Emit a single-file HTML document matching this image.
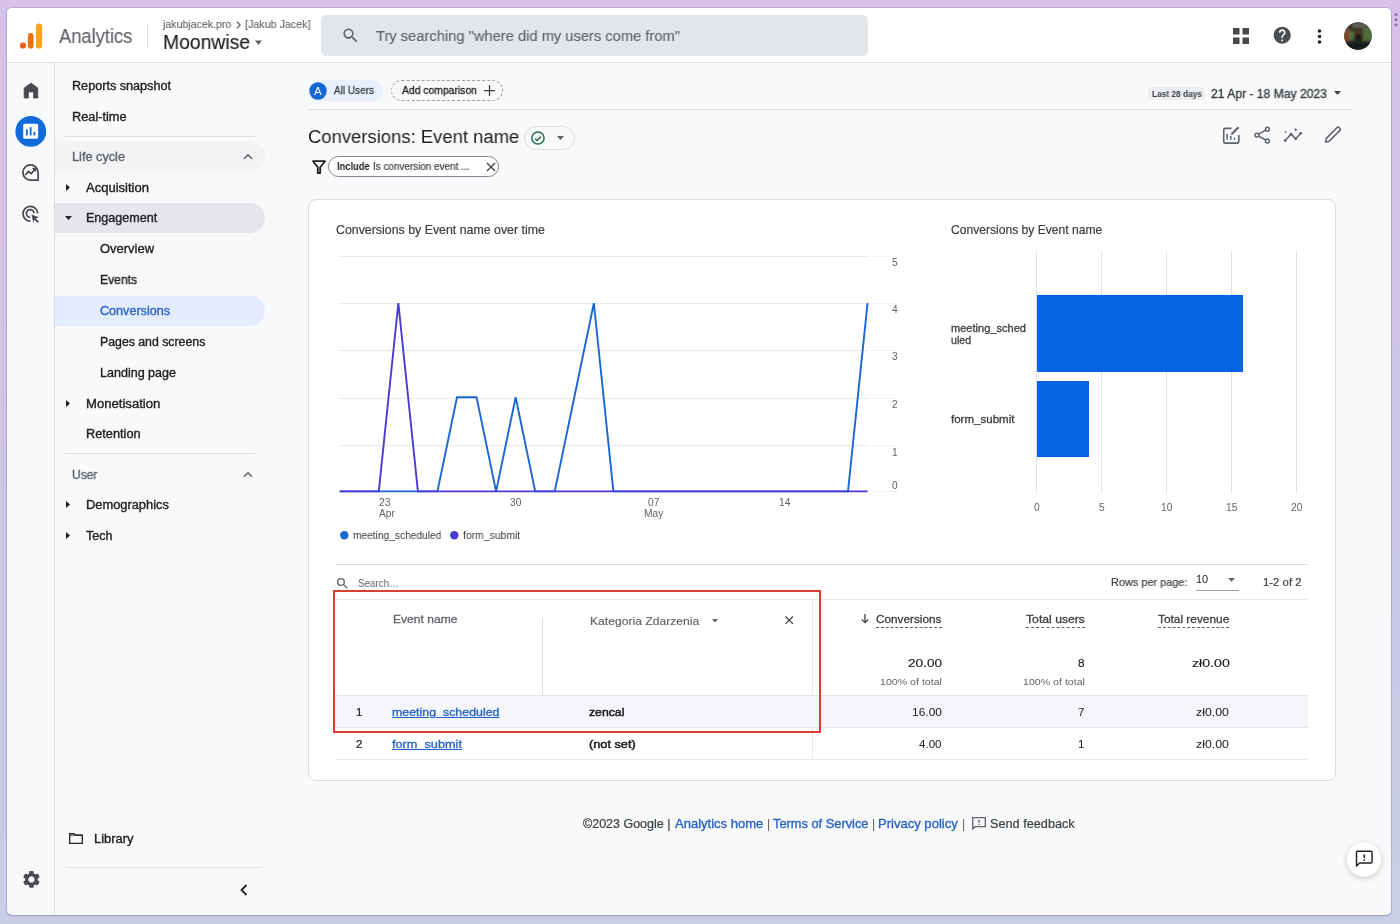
<!DOCTYPE html>
<html><head><meta charset="utf-8">
<style>
*{box-sizing:border-box;margin:0;padding:0}
html,body{width:1400px;height:924px;overflow:hidden}
body{font-family:"Liberation Sans",sans-serif;color:#202124;position:relative;background:linear-gradient(175deg,#d6c2ea 0%,#d6c1e9 15%,#cdc5e6 45%,#c9cae7 75%,#cacfe8 100%)}
.abs{position:absolute}
.t{position:absolute;white-space:nowrap;line-height:1;will-change:transform}
svg{position:absolute;overflow:visible}
</style></head><body>
<div class="abs" style="left:7px;top:8px;width:1384px;height:907px;background:#f8f9fa;border-radius:5px;box-shadow:0 0 0 1px rgba(120,120,140,.25),0 1px 2px rgba(80,80,110,.3)"></div>
<div class="abs" style="left:7px;top:8px;width:1384px;height:55px;background:#fff;border-radius:5px 5px 0 0;border-bottom:1px solid #dfe1e5"></div>
<svg style="left:19px;top:22px" width="24" height="28" viewBox="0 0 24 28"><rect x="17" y="1.4" width="6.2" height="25.2" rx="3.1" fill="#f8a41f"/><rect x="8.9" y="11" width="5.6" height="15.6" rx="2.8" fill="#e8700e"/><circle cx="4" cy="23.5" r="3.1" fill="#e4601c"/></svg>
<div class="t " style="left:59.25px;top:26.00px;font-size:20.5px;color:#5f6368;transform:scaleX(0.8936);transform-origin:0 0;-webkit-text-stroke:0.15px #5f6368;">Analytics</div>
<div class="abs" style="left:147px;top:22.5px;width:1px;height:25.5px;background:#e3e3e3"></div>
<div class="t " style="left:162.50px;top:19.00px;font-size:11.3px;color:#5f6368;transform:scaleX(0.9373);transform-origin:0 0;-webkit-text-stroke:0.1px #5f6368;">jakubjacek.pro</div>
<svg style="left:236px;top:20.5px" width="5" height="8" viewBox="0 0 5 8"><path d="M.8.7L4.2 4 .8 7.3" fill="none" stroke="#5f6368" stroke-width="1.2"/></svg>
<div class="t " style="left:244.50px;top:19.00px;font-size:11.3px;color:#5f6368;transform:scaleX(0.9480);transform-origin:0 0;-webkit-text-stroke:0.1px #5f6368;">[Jakub Jacek]</div>
<div class="t " style="left:163.00px;top:32.00px;font-size:20px;color:#202124;transform:scaleX(0.9662);transform-origin:0 0;-webkit-text-stroke:0.15px #202124;">Moonwise</div>
<svg style="left:255px;top:40px" width="7" height="6" viewBox="0 0 7 6"><path d="M0 .5h7L3.5 5z" fill="#5f6368"/></svg>
<div class="abs" style="left:321px;top:15px;width:547px;height:41px;background:#e3e6e9;border-radius:5px"></div>
<svg style="left:341px;top:26px" width="19" height="19" viewBox="0 0 24 24"><path fill="#5f6368" d="M15.5 14h-.79l-.28-.27A6.47 6.47 0 0 0 16 9.5 6.5 6.5 0 1 0 9.5 16c1.61 0 3.090-.59 4.23-1.57l.27.28v.79l5 4.99L20.49 19l-4.99-5zm-6 0C7.010 14 5 11.99 5 9.5S7.01 5 9.5 5 14 7.010 14 9.5 11.99 14 9.5 14z"/></svg>
<div class="t " style="left:375.75px;top:28.00px;font-size:15.5px;color:#5f6368;transform:scaleX(0.9484);transform-origin:0 0;-webkit-text-stroke:0.15px #5f6368;">Try searching "where did my users come from"</div>
<svg style="left:1233px;top:28px" width="16" height="16" viewBox="0 0 16 16" fill="#47494d"><rect x="0" y="0" width="6.5" height="6.5"/><rect x="9.5" y="0" width="6.5" height="6.5"/><rect x="0" y="9.5" width="6.5" height="6.5"/><rect x="9.5" y="9.5" width="6.5" height="6.5"/></svg>
<svg style="left:1272px;top:25.2px" width="20.4" height="20.4" viewBox="0 0 24 24"><path fill="#4a4d51" d="M12 2C6.48 2 2 6.48 2 12s4.48 10 10 10 10-4.48 10-10S17.52 2 12 2zm1 17h-2v-2h2v2zm2.07-7.75l-.9.92C13.45 12.9 13 13.5 13 15h-2v-.5c0-1.1.45-2.1 1.17-2.83l1.24-1.26c.37-.36.59-.86.59-1.41 0-1.1-.9-2-2-2s-2 .9-2 2H8c0-2.21 1.79-4 4-4s4 1.79 4 4c0 .88-.36 1.68-.93 2.25z"/></svg>
<svg style="left:1317px;top:29px" width="5" height="15" viewBox="0 0 5 15" fill="#202124"><circle cx="2.5" cy="2" r="1.8"/><circle cx="2.5" cy="7.5" r="1.8"/><circle cx="2.5" cy="13" r="1.8"/></svg>
<svg style="left:1343.5px;top:22px" width="28" height="28" viewBox="0 0 28 28"><defs><clipPath id="av"><circle cx="14" cy="14" r="13.7"/></clipPath><filter id="bl"><feGaussianBlur stdDeviation="1"/></filter></defs><g clip-path="url(#av)"><rect width="28" height="28" fill="#2e302a"/><g filter="url(#bl)"><rect x="-2" y="6" width="8" height="13" fill="#7a4a28"/><rect x="19" y="5" width="10" height="14" fill="#4f6a3a"/><rect x="5" y="9" width="5" height="9" fill="#55703e"/><rect x="8" y="1" width="14" height="5" fill="#5e5e52"/><ellipse cx="14.5" cy="12" rx="4.5" ry="6" fill="#4a3428"/><ellipse cx="14.5" cy="15.5" rx="3.5" ry="3.5" fill="#22180f"/><rect x="0" y="20" width="28" height="10" fill="#161c1a"/></g></g></svg>
<div class="abs" style="left:54px;top:62px;width:1px;height:853px;background:#dadce0"></div>
<svg style="left:23px;top:82px" width="16" height="17" viewBox="3 3 18 18"><path fill="#47494d" stroke="#47494d" stroke-width="0.8" stroke-linejoin="round" d="M12 3.6L4.3 9.3v11.2h4.8v-6.8h5.8v6.8h4.8V9.3z"/></svg>
<svg style="left:15px;top:116.3px" width="32" height="31" viewBox="0 0 32 31"><circle cx="15.8" cy="15.4" r="15.4" fill="#0f6bdc"/><rect x="8.2" y="7.8" width="14.9" height="14.9" rx="1.5" fill="#fff"/><rect x="11" y="13.5" width="1.8" height="6" fill="#0f6bdc"/><rect x="14.75" y="11.1" width="1.8" height="8.4" fill="#0f6bdc"/><rect x="18.5" y="15.9" width="1.8" height="3.6" fill="#0f6bdc"/></svg>
<svg style="left:22.3px;top:164px" width="17" height="17" viewBox="0 0 17 17" fill="none" stroke="#47494d" stroke-width="1.7"><path d="M16.1 8.5A7.6 7.6 0 1 0 8.5 16.1H16.1Z"/><path d="M3.3 10.8l3.2-3.3 2.6 2.1 3.8-4.2"/><path d="M10.3 4.1h3.6v3.6z" fill="#47494d" stroke-width=".6"/></svg>
<svg style="left:22px;top:205px" width="18" height="18" viewBox="0 0 18 18" fill="none" stroke="#47494d" stroke-width="1.7"><path d="M8.4 16.2A7.4 7.4 0 1 1 15.8 8.4"/><path d="M8.2 12.2A3.8 3.8 0 1 1 12 8.3"/><path d="M9.5 9.5l7.3 2.8-3 1.2 3.2 3.2-1.3 1.3-3.2-3.2-1.2 3z" fill="#47494d" stroke="none"/></svg>
<svg style="left:20.5px;top:869.1px" width="20.9" height="20.9" viewBox="0 0 24 24"><path fill="#47494d" d="M19.14 12.94c.04-.3.06-.61.06-.94 0-.32-.02-.64-.07-.94l2.03-1.58a.49.49 0 0 0 .12-.61l-1.92-3.32a.488.488 0 0 0-.59-.22l-2.39.96c-.5-.38-1.03-.7-1.62-.94l-.36-2.54a.484.484 0 0 0-.48-.41h-3.84c-.24 0-.43.17-.47.41l-.36 2.54c-.59.24-1.13.57-1.62.94l-2.39-.96c-.22-.08-.47 0-.59.22L2.74 8.87c-.12.21-.08.47.12.61l2.03 1.58c-.05.3-.09.63-.09.94s.02.64.07.94l-2.03 1.58a.49.49 0 0 0-.12.61l1.92 3.32c.12.22.37.29.59.22l2.39-.96c.5.38 1.030.7 1.62.94l.36 2.54c.05.24.24.41.48.41h3.84c.24 0 .44-.17.47-.41l.36-2.54c.59-.24 1.13-.56 1.62-.94l2.39.96c.22.08.47 0 .59-.22l1.92-3.32c.12-.22.07-.47-.12-.61l-2.01-1.58zM12 15.6c-1.98 0-3.6-1.62-3.6-3.6s1.62-3.6 3.6-3.6 3.6 1.62 3.6 3.6-1.62 3.6-3.6 3.6z"/></svg>
<div class="t " style="left:72.30px;top:80.00px;font-size:12.3px;color:#202124;transform:scaleX(1.0269);transform-origin:0 0;-webkit-text-stroke:0.35px #202124;">Reports snapshot</div>
<div class="t " style="left:72.30px;top:111.00px;font-size:12.3px;color:#202124;transform:scaleX(1.0374);transform-origin:0 0;-webkit-text-stroke:0.35px #202124;">Real-time</div>
<div class="abs" style="left:65px;top:136px;width:190px;height:1px;background:#dadce0"></div>
<div class="abs" style="left:55px;top:141px;width:210px;height:31px;background:#f1f3f4;border-radius:0 16px 16px 0"></div>
<div class="t " style="left:72.30px;top:151.00px;font-size:12.3px;color:#5f6368;transform:scaleX(1.0337);transform-origin:0 0;-webkit-text-stroke:0.35px #5f6368;">Life cycle</div>
<svg style="left:242.5px;top:153px" width="10" height="7" viewBox="0 0 10 7"><path d="M1 5.8L5 1.8l4 4" fill="none" stroke="#5f6368" stroke-width="1.6"/></svg>
<svg style="left:66px;top:184px" width="4" height="7" viewBox="0 0 4 7"><path d="M0 0l4 3.5L0 7z" fill="#202124"/></svg>
<div class="t " style="left:86.00px;top:182.00px;font-size:12.3px;color:#202124;transform:scaleX(1.0591);transform-origin:0 0;-webkit-text-stroke:0.35px #202124;">Acquisition</div>
<div class="abs" style="left:55px;top:203px;width:210px;height:30px;background:#e4e6e9;border-radius:0 15px 15px 0"></div>
<svg style="left:64.5px;top:216px" width="7" height="4" viewBox="0 0 7 4"><path d="M0 0h7L3.5 4z" fill="#202124"/></svg>
<div class="t " style="left:86.00px;top:212.00px;font-size:12.3px;color:#202124;transform:scaleX(1.0207);transform-origin:0 0;-webkit-text-stroke:0.35px #202124;">Engagement</div>
<div class="t " style="left:99.50px;top:243.00px;font-size:12.3px;color:#202124;transform:scaleX(1.0534);transform-origin:0 0;-webkit-text-stroke:0.35px #202124;">Overview</div>
<div class="t " style="left:99.50px;top:274.00px;font-size:12.3px;color:#202124;transform:scaleX(0.9840);transform-origin:0 0;-webkit-text-stroke:0.35px #202124;">Events</div>
<div class="abs" style="left:55px;top:296px;width:210px;height:30px;background:#e3ecfc;border-radius:0 15px 15px 0"></div>
<div class="t " style="left:99.50px;top:305.00px;font-size:12.3px;color:#2b63c6;transform:scaleX(1.0239);transform-origin:0 0;-webkit-text-stroke:0.35px #2b63c6;">Conversions</div>
<div class="t " style="left:99.50px;top:336.00px;font-size:12.3px;color:#202124;-webkit-text-stroke:0.35px #202124;">Pages and screens</div>
<div class="t " style="left:99.50px;top:367.00px;font-size:12.3px;color:#202124;transform:scaleX(1.0193);transform-origin:0 0;-webkit-text-stroke:0.35px #202124;">Landing page</div>
<svg style="left:66px;top:400px" width="4" height="7" viewBox="0 0 4 7"><path d="M0 0l4 3.5L0 7z" fill="#202124"/></svg>
<div class="t " style="left:85.70px;top:398.00px;font-size:12.3px;color:#202124;transform:scaleX(1.0668);transform-origin:0 0;-webkit-text-stroke:0.35px #202124;">Monetisation</div>
<div class="t " style="left:85.70px;top:428.00px;font-size:12.3px;color:#202124;transform:scaleX(1.0369);transform-origin:0 0;-webkit-text-stroke:0.35px #202124;">Retention</div>
<div class="abs" style="left:65px;top:453px;width:190px;height:1px;background:#dadce0"></div>
<div class="t " style="left:72.00px;top:469.00px;font-size:12.3px;color:#5f6368;transform:scaleX(0.9780);transform-origin:0 0;-webkit-text-stroke:0.35px #5f6368;">User</div>
<svg style="left:242.5px;top:470.5px" width="10" height="7" viewBox="0 0 10 7"><path d="M1 5.8L5 1.8l4 4" fill="none" stroke="#5f6368" stroke-width="1.6"/></svg>
<svg style="left:66px;top:501px" width="4" height="7" viewBox="0 0 4 7"><path d="M0 0l4 3.5L0 7z" fill="#202124"/></svg>
<div class="t " style="left:85.70px;top:499.00px;font-size:12.3px;color:#202124;transform:scaleX(1.0453);transform-origin:0 0;-webkit-text-stroke:0.35px #202124;">Demographics</div>
<svg style="left:66px;top:532px" width="4" height="7" viewBox="0 0 4 7"><path d="M0 0l4 3.5L0 7z" fill="#202124"/></svg>
<div class="t " style="left:85.70px;top:530.00px;font-size:12.3px;color:#202124;transform:scaleX(1.0161);transform-origin:0 0;-webkit-text-stroke:0.35px #202124;">Tech</div>
<svg style="left:69px;top:833px" width="14" height="11" viewBox="0 0 14 11" fill="none" stroke="#202124" stroke-width="1.3"><path d="M.7 10.3V.7h4.5l1.3 1.4h6.8v8.2z"/><path d="M.7 2.1h12.6" stroke-width="1"/></svg>
<div class="t " style="left:94.30px;top:833.00px;font-size:12.3px;color:#202124;transform:scaleX(1.0532);transform-origin:0 0;-webkit-text-stroke:0.35px #202124;">Library</div>
<div class="abs" style="left:66px;top:866.5px;width:196px;height:1.2px;background:#e3e5e8"></div>
<svg style="left:238.5px;top:884px" width="9" height="12" viewBox="0 0 9 12"><path d="M7.5 1L2.5 6l5 5" fill="none" stroke="#202124" stroke-width="1.8"/></svg>
<div class="abs" style="left:309px;top:80px;width:74px;height:21px;background:#e8f0fe;border-radius:11px"></div>
<svg style="left:309px;top:82px" width="18" height="18" viewBox="0 0 18 18"><circle cx="9" cy="9" r="8.7" fill="#1668d8"/></svg>
<div class="t " style="left:314.16px;top:86.00px;font-size:11.5px;color:#fff;">A</div>
<div class="t " style="left:333.80px;top:85.00px;font-size:11.2px;color:#3c4043;transform:scaleX(0.8927);transform-origin:0 0;-webkit-text-stroke:0.3px #3c4043;">All Users</div>
<div class="abs" style="left:391px;top:80px;width:112px;height:21px;border:1px dashed #9aa0a6;border-radius:11px"></div>
<div class="t " style="left:402.00px;top:85.00px;font-size:11.2px;color:#202124;transform:scaleX(0.9267);transform-origin:0 0;-webkit-text-stroke:0.3px #202124;">Add comparison</div>
<svg style="left:484px;top:84.5px" width="11" height="11" viewBox="0 0 11 11"><path d="M5.5 0v11M0 5.5h11" stroke="#3c4043" stroke-width="1.25"/></svg>
<div class="abs" style="left:308px;top:109px;width:1044px;height:1px;background:#dadce0"></div>
<div class="abs" style="left:1148px;top:87px;width:57px;height:13px;background:#eceef0;border-radius:3px"></div>
<div class="t " style="left:1151.70px;top:90.00px;font-size:8.6px;color:#3c4043;font-weight:bold;transform:scaleX(0.9684);transform-origin:0 0;">Last 28 days</div>
<div class="t " style="left:1210.80px;top:88.00px;font-size:12.2px;color:#3c4043;transform:scaleX(0.9944);transform-origin:0 0;-webkit-text-stroke:0.35px #3c4043;">21 Apr - 18 May 2023</div>
<svg style="left:1333.5px;top:90.5px" width="7" height="4" viewBox="0 0 7 4"><path d="M0 0h7L3.5 4z" fill="#3c4043"/></svg>
<div class="t " style="left:307.80px;top:128.00px;font-size:18.8px;color:#202124;transform:scaleX(0.9825);transform-origin:0 0;">Conversions: Event name</div>
<div class="abs" style="left:523.5px;top:126px;width:51px;height:23.5px;border:1px solid #dadce0;border-radius:12px"></div>
<svg style="left:530.2px;top:129.6px" width="16" height="16" viewBox="0 0 16 16"><circle cx="8" cy="8" r="6.1" fill="none" stroke="#23704a" stroke-width="1.5"/><path d="M5.2 8.6l2 1.9 3.8-3.9" fill="none" stroke="#23704a" stroke-width="1.5"/></svg>
<svg style="left:557px;top:135.5px" width="7" height="4" viewBox="0 0 7 4"><path d="M0 0h7L3.5 4z" fill="#5f6368"/></svg>
<svg style="left:311.5px;top:159.5px" width="14" height="14" viewBox="0 0 14 14"><path d="M1 1.2h12L8.2 7.2v5.8H5.8V7.2z" fill="none" stroke="#202124" stroke-width="1.8" stroke-linejoin="round"/></svg>
<div class="abs" style="left:328px;top:156px;width:171px;height:21px;background:#fff;border:1px solid #80868b;border-radius:11px"></div>
<div class="t " style="left:336.50px;top:162.00px;font-size:10.2px;color:#202124;font-weight:bold;transform:scaleX(0.9158);transform-origin:0 0;">Include</div>
<div class="t " style="left:372.60px;top:162.00px;font-size:10.2px;color:#3c4043;transform:scaleX(0.9716);transform-origin:0 0;-webkit-text-stroke:0.2px #3c4043;">Is conversion event ...</div>
<svg style="left:485.5px;top:161.5px" width="10" height="10" viewBox="0 0 10 10"><path d="M1 1l8 8M9 1L1 9" stroke="#3c4043" stroke-width="1.3"/></svg>
<svg style="left:0;top:0" width="1400" height="160" fill="none" stroke="#5f6368" stroke-width="1.6"><path d="M1231.5 128.4H1225.2a1.5 1.5 0 0 0-1.5 1.5V141.6a1.5 1.5 0 0 0 1.5 1.5H1237.3a1.5 1.5 0 0 0 1.5-1.5V135"/><path d="M1227.1 133.7V139.7M1230.8 136V139.7M1234.5 137.8V139.7" stroke-width="1.5"/><path d="M1232.3 133.6L1238.6 127.3" stroke-width="2.1"/><path d="M1231.2 134.7l.5-1.8 1.3 1.3z" fill="#5f6368" stroke-width=".6"/><circle cx="1267.4" cy="129.2" r="1.95" stroke-width="1.5"/><circle cx="1256.9" cy="135.1" r="1.95" stroke-width="1.5"/><circle cx="1267.4" cy="141" r="1.95" stroke-width="1.5"/><path d="M1258.6 134.1L1265.7 130.2M1258.6 136.1L1265.7 140" stroke-width="1.5"/><path d="M1285.2 140.6L1291.1 134.2L1295.7 138.7L1300.7 133.3" stroke-width="1.5"/><g fill="#5f6368" stroke="none"><circle cx="1285.2" cy="140.6" r="1.4"/><circle cx="1291.1" cy="134.2" r="1.4"/><circle cx="1295.7" cy="138.7" r="1.4"/><circle cx="1300.7" cy="133.3" r="1.4"/><path d="M1295.7 127.4l.55 1.65 1.65.55-1.65.55-.55 1.65-.55-1.65-1.65-.55 1.65-.55z"/><path d="M1285.6 130.6l.4 1 1 .4-1 .4-.4 1-.4-1-1-.4 1-.4z"/></g><path d="M1325.6 142.1L1326.3 138.4L1336.9 127.8Q1338.1 126.6 1339.3 127.8L1339.7 128.2Q1340.9 129.4 1339.7 130.6L1329.1 141.2Z" stroke-width="1.6" stroke-linejoin="round"/></svg>
<div class="abs" style="left:308px;top:199px;width:1028px;height:582px;background:#fff;border:1px solid #dadce0;border-radius:8px"></div>
<div class="t " style="left:335.50px;top:224.00px;font-size:12.1px;color:#3c4043;transform:scaleX(1.0222);transform-origin:0 0;-webkit-text-stroke:0.2px #3c4043;">Conversions by Event name over time</div>
<div class="abs" style="left:339px;top:256px;width:529px;height:1px;background:#e8eaed"></div>
<div class="abs" style="left:871px;top:256px;width:26px;height:1px;background:#f1f3f4"></div>
<div class="abs" style="left:339px;top:303px;width:529px;height:1px;background:#e8eaed"></div>
<div class="abs" style="left:871px;top:303px;width:26px;height:1px;background:#f1f3f4"></div>
<div class="abs" style="left:339px;top:350px;width:529px;height:1px;background:#e8eaed"></div>
<div class="abs" style="left:871px;top:350px;width:26px;height:1px;background:#f1f3f4"></div>
<div class="abs" style="left:339px;top:398px;width:529px;height:1px;background:#e8eaed"></div>
<div class="abs" style="left:871px;top:398px;width:26px;height:1px;background:#f1f3f4"></div>
<div class="abs" style="left:339px;top:445px;width:529px;height:1px;background:#e8eaed"></div>
<div class="abs" style="left:871px;top:445px;width:26px;height:1px;background:#f1f3f4"></div>
<div class="abs" style="left:871px;top:491px;width:26px;height:1px;background:#f1f3f4"></div>
<div class="t " style="left:892.16px;top:258.00px;font-size:10.2px;color:#5f6368;">5</div>
<div class="t " style="left:892.16px;top:305.00px;font-size:10.2px;color:#5f6368;">4</div>
<div class="t " style="left:892.16px;top:352.00px;font-size:10.2px;color:#5f6368;">3</div>
<div class="t " style="left:892.16px;top:400.00px;font-size:10.2px;color:#5f6368;">2</div>
<div class="t " style="left:892.16px;top:448.00px;font-size:10.2px;color:#5f6368;">1</div>
<div class="t " style="left:892.16px;top:481.00px;font-size:10.2px;color:#5f6368;">0</div>
<svg style="left:0;top:0" width="1400" height="924"><polyline points="339.70,491.40 359.25,491.40 378.80,491.40 398.35,491.40 417.90,491.40 437.45,491.40 457.00,397.30 476.55,397.30 496.10,491.40 515.65,397.30 535.20,491.40 554.75,491.40 574.30,397.30 593.85,303.20 613.40,491.40 632.95,491.40 652.50,491.40 672.05,491.40 691.60,491.40 711.15,491.40 730.70,491.40 750.25,491.40 769.80,491.40 789.35,491.40 808.90,491.40 828.45,491.40 848.00,491.40 867.55,303.20" fill="none" stroke="#1967d2" stroke-width="1.9" stroke-linejoin="miter"/><polyline points="339.70,491.40 359.25,491.40 378.80,491.40 398.35,303.20 417.90,491.40 437.45,491.40 457.00,491.40 476.55,491.40 496.10,491.40 515.65,491.40 535.20,491.40 554.75,491.40 574.30,491.40 593.85,491.40 613.40,491.40 632.95,491.40 652.50,491.40 672.05,491.40 691.60,491.40 711.15,491.40 730.70,491.40 750.25,491.40 769.80,491.40 789.35,491.40 808.90,491.40 828.45,491.40 848.00,491.40 867.55,491.40" fill="none" stroke="#4a3bd6" stroke-width="1.9" stroke-linejoin="miter"/></svg>
<div class="t " style="left:378.90px;top:498.00px;font-size:10.2px;color:#5f6368;">23</div>
<div class="t " style="left:378.90px;top:509.00px;font-size:10.2px;color:#5f6368;">Apr</div>
<div class="t " style="left:510.30px;top:498.00px;font-size:10.2px;color:#5f6368;">30</div>
<div class="t " style="left:647.93px;top:498.00px;font-size:10.2px;color:#5f6368;">07</div>
<div class="t " style="left:643.96px;top:509.00px;font-size:10.2px;color:#5f6368;">May</div>
<div class="t " style="left:778.73px;top:498.00px;font-size:10.2px;color:#5f6368;">14</div>
<svg style="left:339.5px;top:531px" width="9" height="9" viewBox="0 0 9 9"><circle cx="4.3" cy="4.3" r="4.2" fill="#1967d2"/></svg>
<div class="t " style="left:352.60px;top:530.00px;font-size:10.6px;color:#3c4043;transform:scaleX(0.9615);transform-origin:0 0;">meeting_scheduled</div>
<svg style="left:450px;top:531px" width="9" height="9" viewBox="0 0 9 9"><circle cx="4.3" cy="4.3" r="4.2" fill="#4a3bd6"/></svg>
<div class="t " style="left:463.10px;top:530.00px;font-size:10.6px;color:#3c4043;transform:scaleX(0.9808);transform-origin:0 0;">form_submit</div>
<div class="t " style="left:951.40px;top:224.00px;font-size:12.1px;color:#3c4043;-webkit-text-stroke:0.2px #3c4043;">Conversions by Event name</div>
<div class="abs" style="left:1036px;top:252px;width:1px;height:241px;background:#e0e0e0"></div>
<div class="t " style="left:1034.06px;top:503.00px;font-size:10.2px;color:#5f6368;">0</div>
<div class="abs" style="left:1101px;top:252px;width:1px;height:241px;background:#e0e0e0"></div>
<div class="t " style="left:1099.06px;top:503.00px;font-size:10.2px;color:#5f6368;">5</div>
<div class="abs" style="left:1166px;top:252px;width:1px;height:241px;background:#e0e0e0"></div>
<div class="t " style="left:1161.23px;top:503.00px;font-size:10.2px;color:#5f6368;">10</div>
<div class="abs" style="left:1231px;top:252px;width:1px;height:241px;background:#e0e0e0"></div>
<div class="t " style="left:1226.43px;top:503.00px;font-size:10.2px;color:#5f6368;">15</div>
<div class="abs" style="left:1296px;top:252px;width:1px;height:241px;background:#e0e0e0"></div>
<div class="t " style="left:1291.23px;top:503.00px;font-size:10.2px;color:#5f6368;">20</div>
<div class="abs" style="left:1036.5px;top:295.2px;width:206.6px;height:76.9px;background:#0865e2"></div>
<div class="abs" style="left:1036.5px;top:380.6px;width:52.3px;height:76.6px;background:#0865e2"></div>
<div class="t " style="left:951.40px;top:323.00px;font-size:10.6px;color:#3c4043;transform:scaleX(1.0432);transform-origin:0 0;-webkit-text-stroke:0.3px #3c4043;">meeting_sched</div>
<div class="t " style="left:951.40px;top:335.00px;font-size:10.6px;color:#3c4043;-webkit-text-stroke:0.3px #3c4043;">uled</div>
<div class="t " style="left:951.40px;top:414.00px;font-size:10.6px;color:#3c4043;transform:scaleX(1.0889);transform-origin:0 0;-webkit-text-stroke:0.3px #3c4043;">form_submit</div>
<div class="abs" style="left:335px;top:564px;width:973px;height:1px;background:#dadce0"></div>
<svg style="left:334.5px;top:575.6px" width="15" height="15" viewBox="0 0 24 24"><path fill="#5f6368" d="M15.5 14h-.79l-.28-.27A6.47 6.47 0 0 0 16 9.5 6.5 6.5 0 1 0 9.5 16c1.61 0 3.09-.59 4.23-1.57l.27.28v.79l5 4.99L20.49 19l-4.99-5zm-6 0C7.01 14 5 11.99 5 9.5S7.01 5 9.5 5 14 7.01 14 9.5 11.99 14 9.5 14z"/></svg>
<div class="t " style="left:357.50px;top:578.00px;font-size:10.8px;color:#5f6368;transform:scaleX(0.9062);transform-origin:0 0;">Search…</div>
<div class="t " style="left:1111.20px;top:577.00px;font-size:11px;color:#3c4043;transform:scaleX(0.9916);transform-origin:0 0;-webkit-text-stroke:0.2px #3c4043;">Rows per page:</div>
<div class="t " style="left:1196.40px;top:574.00px;font-size:11px;color:#202124;">10</div>
<svg style="left:1228px;top:577.5px" width="7" height="3.8" viewBox="0 0 7 3.8"><path d="M0 0h7L3.5 3.8z" fill="#5f6368"/></svg>
<div class="abs" style="left:1196px;top:590px;width:43px;height:1px;background:#9aa0a6"></div>
<div class="t " style="left:1262.80px;top:577.00px;font-size:11px;color:#3c4043;transform:scaleX(1.0348);transform-origin:0 0;-webkit-text-stroke:0.2px #3c4043;">1-2 of 2</div>
<div class="abs" style="left:335px;top:598.5px;width:973px;height:1px;background:#e8eaed"></div>
<div class="t " style="left:392.90px;top:613.00px;font-size:11.6px;color:#5f6368;transform:scaleX(1.0419);transform-origin:0 0;-webkit-text-stroke:0.3px #5f6368;">Event name</div>
<div class="abs" style="left:542px;top:618px;width:1px;height:98px;background:#dadce0"></div>
<div class="t " style="left:589.60px;top:615.00px;font-size:11.6px;color:#5f6368;transform:scaleX(1.0463);transform-origin:0 0;-webkit-text-stroke:0.15px #5f6368;">Kategoria Zdarzenia</div>
<svg style="left:712px;top:618.5px" width="6" height="3.5" viewBox="0 0 6 3.5"><path d="M0 0h6L3 3.5z" fill="#5f6368"/></svg>
<svg style="left:784.8px;top:616px" width="8.4" height="8.4" viewBox="0 0 8.4 8.4"><path d="M.5.5l7.4 7.4M7.9.5L.5 7.9" stroke="#3c4043" stroke-width="1.2"/></svg>
<div class="abs" style="left:812px;top:600px;width:1px;height:160px;background:#e8eaed"></div>
<svg style="left:861px;top:614px" width="8" height="10" viewBox="0 0 8 10"><path d="M4 0v8.6M.9 5.5L4 8.6 7.1 5.5" fill="none" stroke="#3c4043" stroke-width="1.3"/></svg>
<div class="t " style="left:876.40px;top:613.00px;font-size:11.6px;color:#3c4043;transform:scaleX(1.0159);transform-origin:0 0;-webkit-text-stroke:0.3px #3c4043;">Conversions</div>
<div class="abs" style="left:876px;top:627px;width:66px;height:1px;border-top:1px dashed #5f6368"></div>
<div class="t " style="left:1025.60px;top:613.00px;font-size:11.6px;color:#3c4043;transform:scaleX(1.0518);transform-origin:0 0;-webkit-text-stroke:0.3px #3c4043;">Total users</div>
<div class="abs" style="left:1026px;top:627px;width:59px;height:1px;border-top:1px dashed #5f6368"></div>
<div class="t " style="left:1157.90px;top:613.00px;font-size:11.6px;color:#3c4043;transform:scaleX(1.0237);transform-origin:0 0;-webkit-text-stroke:0.3px #3c4043;">Total revenue</div>
<div class="abs" style="left:1158px;top:627px;width:71px;height:1px;border-top:1px dashed #5f6368"></div>
<div class="t " style="left:908.30px;top:658.00px;font-size:11.8px;color:#202124;transform:scaleX(1.1514);transform-origin:0 0;-webkit-text-stroke:0.15px #202124;">20.00</div>
<div class="t " style="left:879.80px;top:677.00px;font-size:9.4px;color:#5f6368;transform:scaleX(1.1317);transform-origin:0 0;">100% of total</div>
<div class="t " style="left:1078.44px;top:658.00px;font-size:11.8px;color:#202124;-webkit-text-stroke:0.15px #202124;">8</div>
<div class="t " style="left:1022.50px;top:677.00px;font-size:9.4px;color:#5f6368;transform:scaleX(1.1317);transform-origin:0 0;">100% of total</div>
<div class="t " style="left:1191.80px;top:658.00px;font-size:11.8px;color:#202124;transform:scaleX(1.2004);transform-origin:0 0;-webkit-text-stroke:0.15px #202124;">zł0.00</div>
<div class="abs" style="left:335px;top:695px;width:973px;height:33px;background:#f4f6f9;border-top:1px solid #e4e6ea;border-bottom:1px solid #e4e6ea"></div>
<div class="t " style="left:355.77px;top:706.00px;font-size:11.6px;color:#202124;-webkit-text-stroke:0.2px #202124;">1</div>
<div class="t " style="left:392.10px;top:706.00px;font-size:11.6px;color:#2461c8;transform:scaleX(1.0685);transform-origin:0 0;text-decoration:underline;-webkit-text-stroke:0.3px #2461c8;">meeting_scheduled</div>
<div class="t " style="left:588.80px;top:706.00px;font-size:11.6px;color:#202124;transform:scaleX(1.0557);transform-origin:0 0;-webkit-text-stroke:0.5px #202124;">zencal</div>
<div class="t " style="left:911.90px;top:706.00px;font-size:11.6px;color:#202124;transform:scaleX(1.0334);transform-origin:0 0;">16.00</div>
<div class="t " style="left:1078.15px;top:706.00px;font-size:11.6px;color:#202124;">7</div>
<div class="t " style="left:1196.20px;top:706.00px;font-size:11.6px;color:#202124;transform:scaleX(1.0661);transform-origin:0 0;">zł0.00</div>
<div class="t " style="left:355.77px;top:738.00px;font-size:11.6px;color:#202124;-webkit-text-stroke:0.2px #202124;">2</div>
<div class="t " style="left:392.10px;top:738.00px;font-size:11.6px;color:#2461c8;transform:scaleX(1.0969);transform-origin:0 0;text-decoration:underline;-webkit-text-stroke:0.3px #2461c8;">form_submit</div>
<div class="t " style="left:588.80px;top:738.00px;font-size:11.6px;color:#202124;transform:scaleX(1.0975);transform-origin:0 0;-webkit-text-stroke:0.5px #202124;">(not set)</div>
<div class="t " style="left:919.32px;top:738.00px;font-size:11.6px;color:#202124;">4.00</div>
<div class="t " style="left:1078.15px;top:738.00px;font-size:11.6px;color:#202124;">1</div>
<div class="t " style="left:1196.20px;top:738.00px;font-size:11.6px;color:#202124;transform:scaleX(1.0661);transform-origin:0 0;">zł0.00</div>
<div class="abs" style="left:335px;top:759px;width:973px;height:1px;background:#e8eaed"></div>
<div class="abs" style="left:333px;top:590px;width:488px;height:143px;border:2px solid #d93d36"></div>
<div class="t " style="left:583.10px;top:818.00px;font-size:12.2px;color:#3c4043;transform:scaleX(1.0244);transform-origin:0 0;-webkit-text-stroke:0.2px #3c4043;">©2023 Google |</div>
<div class="t " style="left:674.90px;top:818.00px;font-size:12.2px;color:#2461c8;transform:scaleX(1.0674);transform-origin:0 0;-webkit-text-stroke:0.3px #2461c8;">Analytics home</div>
<div class="t " style="left:767.20px;top:818.00px;font-size:12.2px;color:#5f6368;">|</div>
<div class="t " style="left:772.90px;top:818.00px;font-size:12.2px;color:#2461c8;transform:scaleX(1.0523);transform-origin:0 0;-webkit-text-stroke:0.3px #2461c8;">Terms of Service</div>
<div class="t " style="left:872.00px;top:818.00px;font-size:12.2px;color:#5f6368;">|</div>
<div class="t " style="left:878.20px;top:818.00px;font-size:12.2px;color:#2461c8;transform:scaleX(1.0700);transform-origin:0 0;-webkit-text-stroke:0.3px #2461c8;">Privacy policy</div>
<div class="t " style="left:961.80px;top:818.00px;font-size:12.2px;color:#5f6368;">|</div>
<svg style="left:972px;top:817px" width="14" height="13" viewBox="0 0 14 13" fill="none" stroke="#5f6368" stroke-width="1.3"><path d="M.7.7h12.6v9H3L.7 12z"/><path d="M7 2.8v3.3M7 7v1" stroke-width="1.3"/></svg>
<div class="t " style="left:990.00px;top:818.00px;font-size:12.2px;color:#3c4043;transform:scaleX(1.0418);transform-origin:0 0;-webkit-text-stroke:0.2px #3c4043;">Send feedback</div>
<svg style="left:1340px;top:836px" width="48" height="48" viewBox="0 0 48 48"><defs><filter id="sh" x="-50%" y="-50%" width="200%" height="200%"><feDropShadow dx="0" dy="1.5" stdDeviation="2.6" flood-color="#3c4043" flood-opacity=".28"/></filter></defs><circle cx="24" cy="23.6" r="17" fill="#fff" filter="url(#sh)"/><path d="M17.6 15.2h13.3a1.2 1.2 0 0 1 1.2 1.2v9.3a1.2 1.2 0 0 1-1.2 1.2H19.6l-3.1 3.1V16.4a1.2 1.2 0 0 1 1.1-1.2z" fill="none" stroke="#202124" stroke-width="1.45" stroke-linejoin="round"/><path d="M24.3 18.6v3.3M24.3 23.2v1.5" stroke="#202124" stroke-width="1.6"/></svg>
<svg style="left:1393px;top:12px" width="6" height="16" viewBox="0 0 6 16" fill="#8a6fae"><circle cx="3" cy="2.5" r="1.5"/><circle cx="3" cy="7.8" r="1.5"/><circle cx="3" cy="13" r="1.5"/></svg>
</body></html>
